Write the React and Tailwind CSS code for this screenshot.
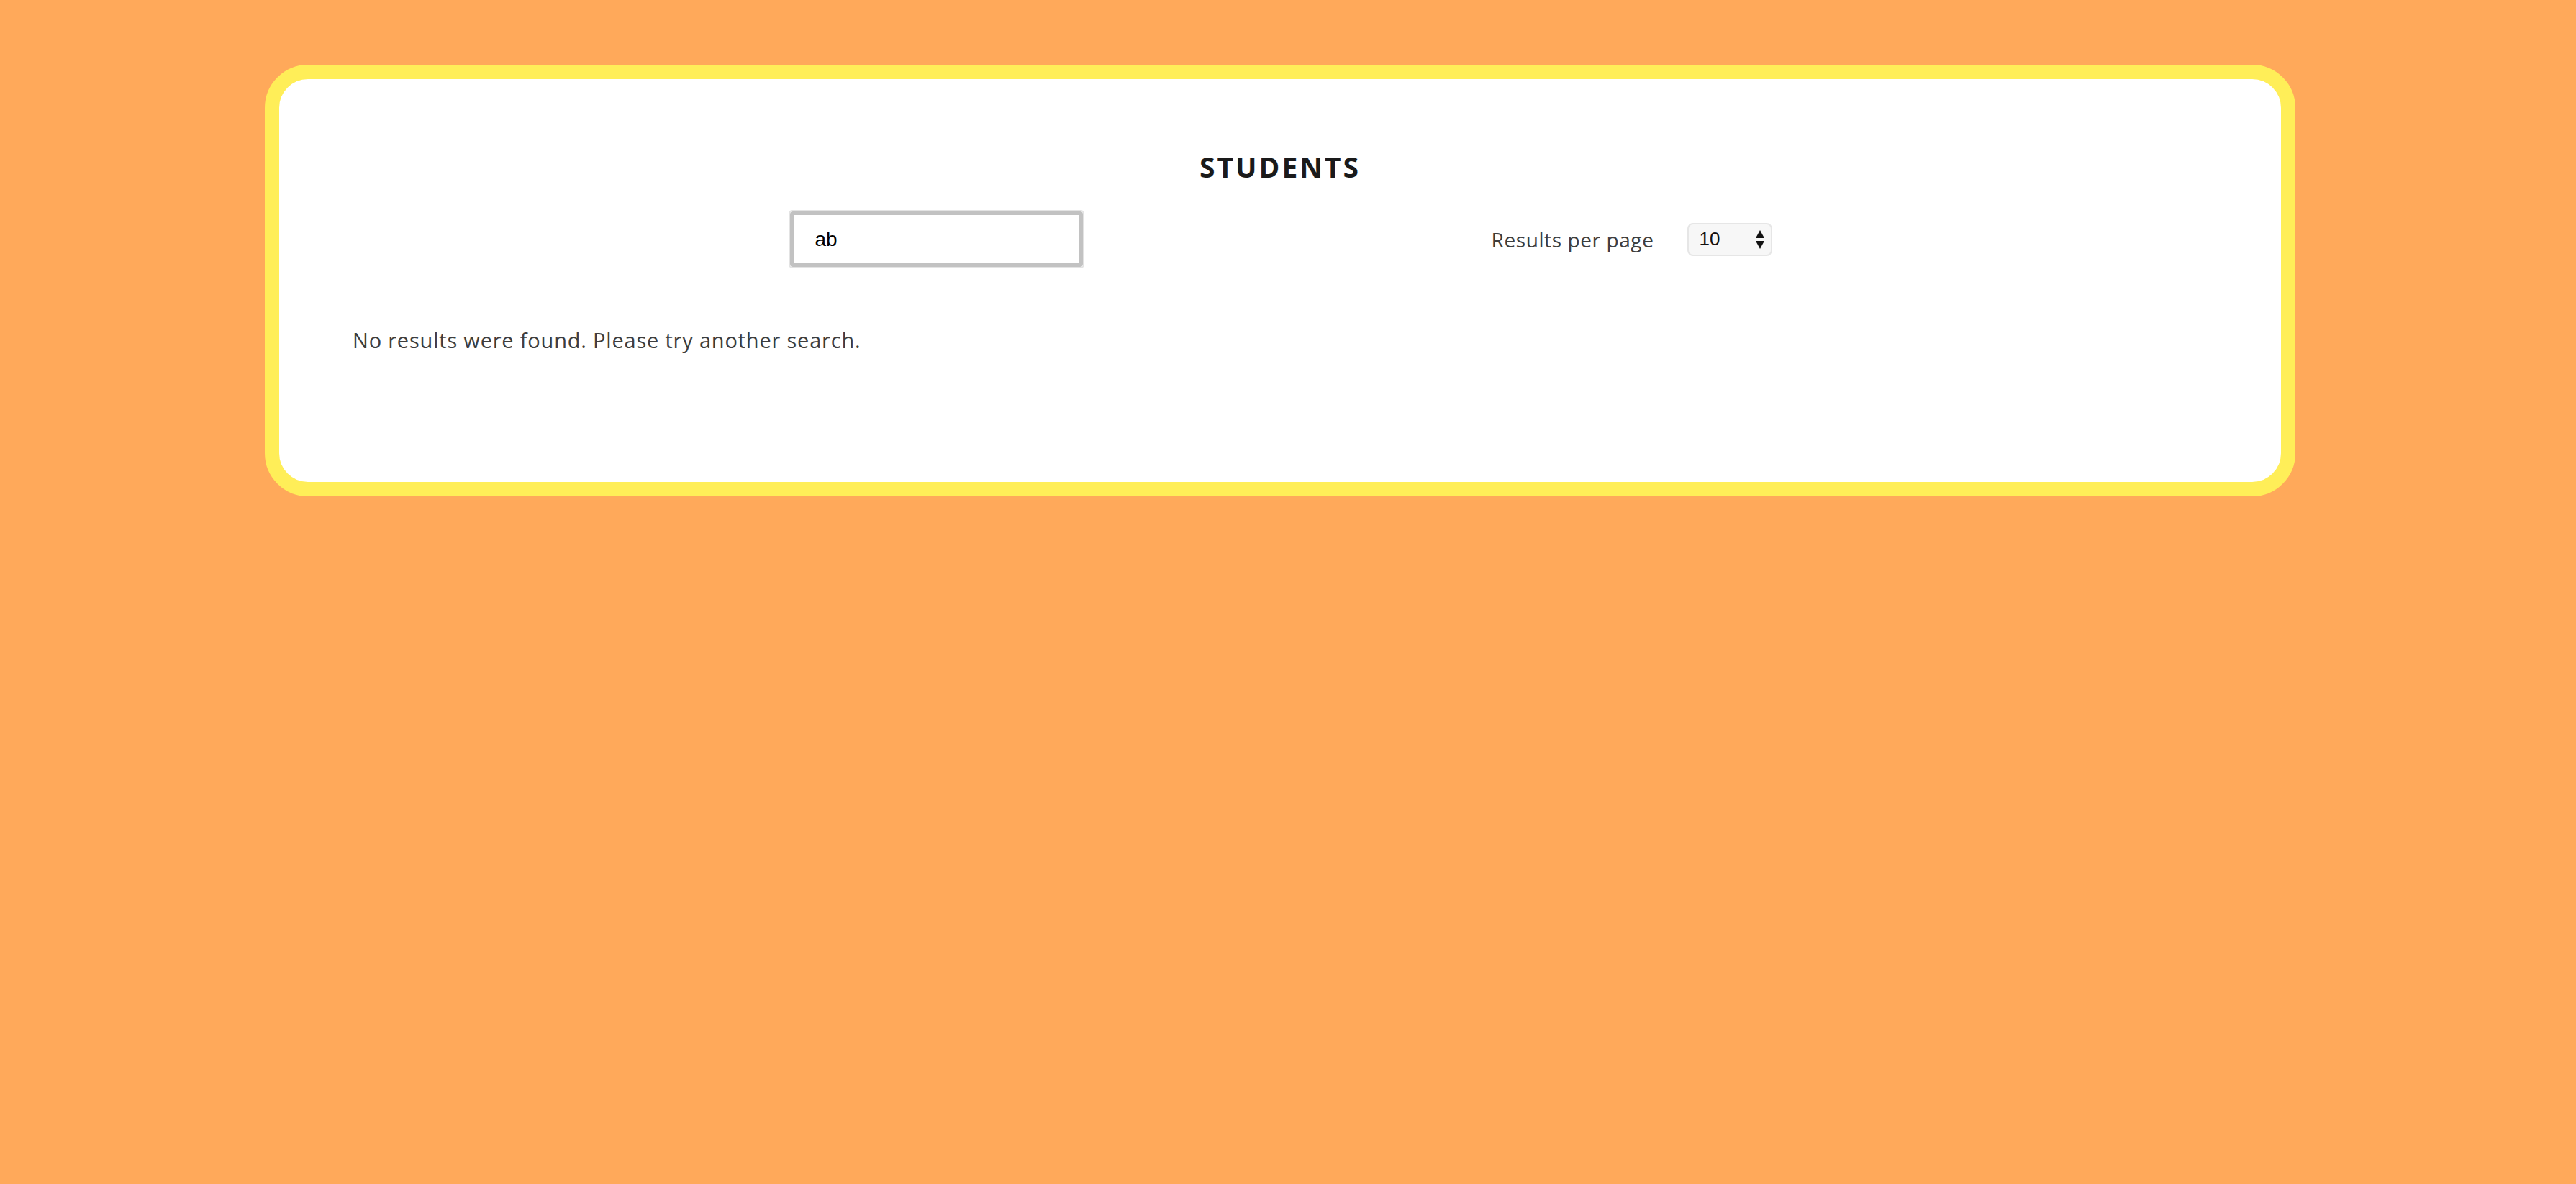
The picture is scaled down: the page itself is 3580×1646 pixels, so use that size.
function SortArrows() {
  return (
    <svg width="14" height="28" viewBox="0 0 14 28" className="shrink-0">
      <path d="M7 1 L13 12 L1 12 Z" fill="#111" />
      <path d="M1 16 L13 16 L7 27 Z" fill="#111" />
    </svg>
  );
}

export default function App() {
  return (
    <div className="min-h-[1646px] w-full bg-[#ffa95a] pt-[90px] font-['Open_Sans',sans-serif]">
      <div className="ml-[368px] w-[2822px] rounded-[60px] border-[20px] border-[#ffee58] bg-white">
        <div className="flex h-[560px] flex-col px-[102px] pt-[98px]">
          <h1 className="text-center text-[39px] leading-[48px] font-bold tracking-[3px] text-[#1a1a1a]">
            STUDENTS
          </h1>

          {/* search + page size */}
          <div className="mx-auto mt-[36px] flex w-[1367px] items-center justify-between">
            <div className="h-[81px] w-[411px] rounded-[5px] border-[2px] border-[#e3e3e3]">
              <div className="flex h-full w-full items-center rounded-[4px] border-[5px] border-[#c2c2c2] pl-[30px] font-['Liberation_Sans',sans-serif] text-[28px] text-black">
                ab
              </div>
            </div>
            <div className="flex items-center gap-[46px]">
              <span className="text-[28px] tracking-[0.6px] text-[#3d3d3d]">Results per page</span>
              <div className="flex h-[46px] w-[118px] items-center justify-between rounded-[8px] border-[2px] border-[#e6e6e6] bg-[#f7f7f7] pr-[8px] pl-[15px] font-['Liberation_Sans',sans-serif] text-[26px] text-[#111]">
                <span>10</span>
                <SortArrows />
              </div>
            </div>
          </div>

          <p className="mt-[78px] text-[29px] tracking-[0.8px] text-[#3d3d3d]">
            No results were found. Please try another search.
          </p>
        </div>
      </div>
    </div>
  );
}
